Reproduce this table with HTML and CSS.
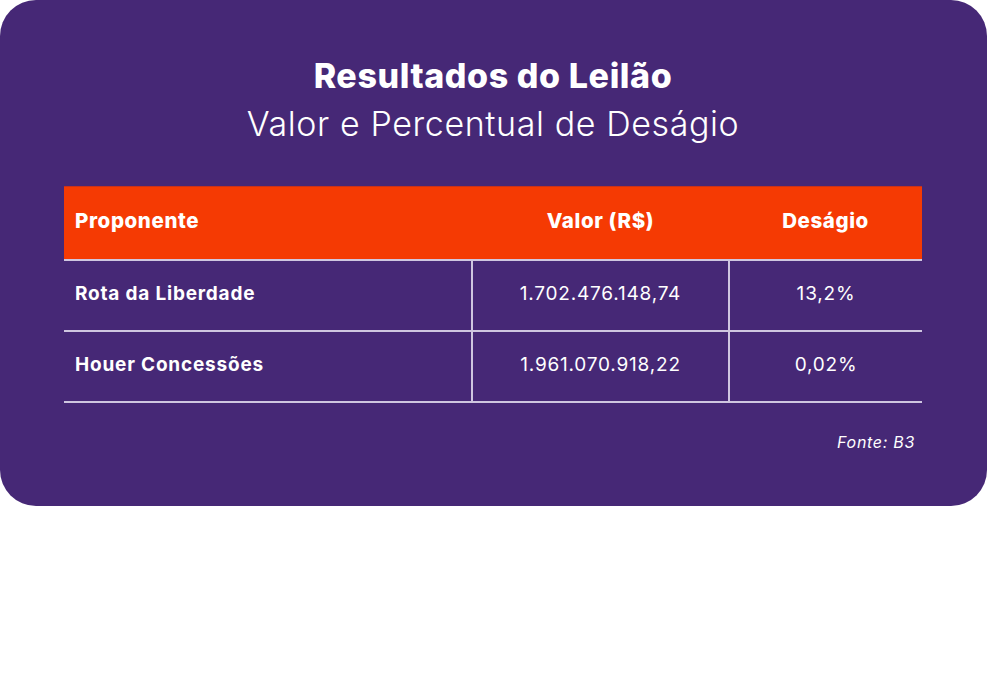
FILE: index.html
```html
<!DOCTYPE html>
<html lang="pt-BR">
<head>
<meta charset="utf-8">
<link rel="stylesheet" href="styles.css">
</head>
<body>
<div class="card">
  <h1 class="title">Resultados do Leilão</h1>
  <p class="subtitle">Valor e Percentual de Deságio</p>
  <table class="results">
    <thead>
      <tr>
        <th class="col-name">Proponente</th>
        <th class="col-value">Valor (R$)</th>
        <th class="col-pct">Deságio</th>
      </tr>
    </thead>
    <tbody>
      <tr>
        <td class="col-name">Rota da Liberdade</td>
        <td class="col-value">1.702.476.148,74</td>
        <td class="col-pct">13,2%</td>
      </tr>
      <tr>
        <td class="col-name">Houer Concessões</td>
        <td class="col-value">1.961.070.918,22</td>
        <td class="col-pct">0,02%</td>
      </tr>
    </tbody>
  </table>
  <p class="source">Fonte: B3</p>
</div>
</body>
</html>
```
FILE: styles.css
```css
html, body {
  margin: 0;
  padding: 0;
  background: #ffffff;
}
body {
  font-family: "Inter", "Noto Sans", sans-serif;
  color: #ffffff;
}
.card {
  width: 987px;
  height: 506px;
  box-sizing: border-box;
  background: #462876;
  border-radius: 36px;
  padding: 56px 65px 0 64px;
  display: flex;
  flex-direction: column;
  align-items: center;
}
.title {
  margin: 0;
  font-size: 34px;
  font-weight: 800;
  line-height: 40px;
  letter-spacing: 0.6px;
}
.subtitle {
  margin: 8px 0 0;
  font-size: 34px;
  font-weight: 300;
  line-height: 40px;
  letter-spacing: 0.6px;
}
.results {
  margin-top: 42px;
  width: 858px;
  border-collapse: collapse;
  font-size: 18px;
}
.results th {
  background: #f53a03;
  border-top: 1px solid #c8321c;
  height: 73px;
  font-size: 20.5px;
  font-weight: 800;
  letter-spacing: 0.6px;
  padding: 0 11px 5px;
  box-sizing: border-box;
}
.results td {
  height: 71px;
  padding: 0 11px 3px;
  border-top: 2px solid #cfc6e0;
  border-bottom: 2px solid #cfc6e0;
  box-sizing: border-box;
}
.results td + td {
  border-left: 2px solid #cfc6e0;
}
.col-name {
  width: 408px;
  text-align: left;
}
td.col-name {
  font-size: 19px;
  font-weight: 700;
  letter-spacing: 0.8px;
}
.col-value {
  width: 257px;
  text-align: center;
}
.col-pct {
  text-align: center;
}
td.col-value, td.col-pct {
  font-size: 19px;
  font-weight: 400;
  letter-spacing: 0.8px;
}
.source {
  align-self: flex-end;
  margin: 29px 7px 0 0;
  font-size: 16px;
  font-style: italic;
  font-weight: 400;
  letter-spacing: 0.7px;
}
```
